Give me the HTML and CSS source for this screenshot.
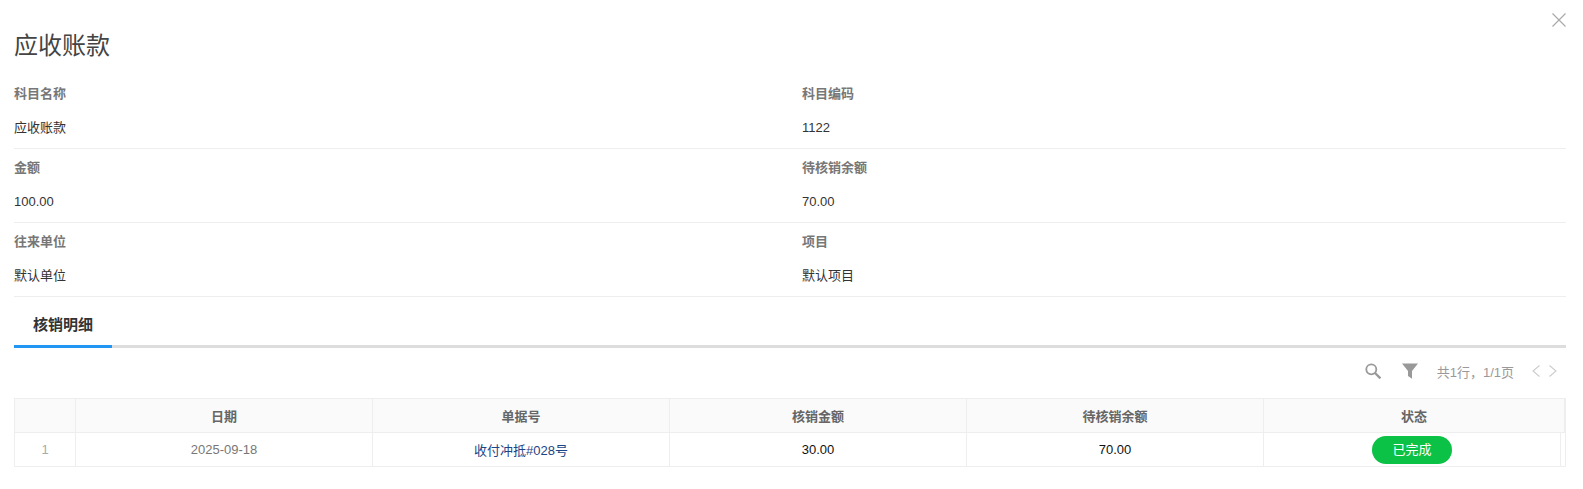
FILE: index.html
```html
<!DOCTYPE html>
<html>
<head>
  <link rel="stylesheet" href="styles.css">
</head>
<body>
  <div class="dialog">
    <button class="close-btn" aria-label="关闭">
      <svg width="14" height="14" viewBox="0 0 14 14"><path d="M0.5 0.5L13.5 13.5M13.5 0.5L0.5 13.5" stroke="#aaa" stroke-width="1.2" fill="none"/></svg>
    </button>
    <h2 class="title">应收账款</h2>

    <div class="fields">
      <div class="field"><div class="field-label">科目名称</div><div class="field-value">应收账款</div></div>
      <div class="field"><div class="field-label">科目编码</div><div class="field-value">1122</div></div>
      <div class="field"><div class="field-label">金额</div><div class="field-value">100.00</div></div>
      <div class="field"><div class="field-label">待核销余额</div><div class="field-value">70.00</div></div>
      <div class="field"><div class="field-label">往来单位</div><div class="field-value">默认单位</div></div>
      <div class="field"><div class="field-label">项目</div><div class="field-value">默认项目</div></div>
    </div>

    <div class="tabs">
      <div class="tab active">核销明细</div>
    </div>

    <div class="toolbar">
      <svg class="tool-search" width="16" height="16" viewBox="0 0 16 16"><circle cx="6.3" cy="6.3" r="5" stroke="#999" stroke-width="1.8" fill="none"/><path d="M10 10L15.4 15.4" stroke="#999" stroke-width="2.3" fill="none"/></svg>
      <svg class="tool-filter" width="16" height="16" viewBox="0 0 16 16"><path d="M0 0.5H16L10 8V15.8L6 13V8Z" fill="#999"/></svg>
      <span class="page-info">共1行，1/1页</span>
      <svg class="tool-prev" width="8" height="12" viewBox="0 0 8 12"><path d="M7.5 0.5L1 6L7.5 11.5" stroke="#ccc" stroke-width="1.1" fill="none"/></svg>
      <svg class="tool-next" width="8" height="12" viewBox="0 0 8 12"><path d="M0.5 0.5L7 6L0.5 11.5" stroke="#ccc" stroke-width="1.1" fill="none"/></svg>
    </div>

    <div class="table">
      <div class="row head">
        <div class="cell"></div>
        <div class="cell">日期</div>
        <div class="cell">单据号</div>
        <div class="cell">核销金额</div>
        <div class="cell">待核销余额</div>
        <div class="cell">状态</div>
        <div class="cell"></div>
      </div>
      <div class="row body">
        <div class="cell index">1</div>
        <div class="cell date">2025-09-18</div>
        <div class="cell"><a class="doc-link" href="#">收付冲抵#028号</a></div>
        <div class="cell num">30.00</div>
        <div class="cell num">70.00</div>
        <div class="cell"><span class="status">已完成</span></div>
        <div class="cell"></div>
      </div>
    </div>
  </div>
</body>
</html>
```

FILE: styles.css
```css
body {
  font-family: "Liberation Sans", "Noto Sans CJK SC", sans-serif;
  margin: 0;
  background: #fff;
  color: #333;
  font-size: 13px;
}

.dialog {
  position: relative;
  height: 489px;
  padding: 0 17px 0 14px;
  box-sizing: border-box;
  overflow: hidden;
}

.close-btn {
  position: absolute;
  top: 13px;
  right: 17px;
  width: 14px;
  height: 14px;
  padding: 0;
  border: none;
  background: none;
  line-height: 0;
}

.title {
  margin: 0;
  padding-top: 29px;
  height: 46px;
  font-size: 24px;
  line-height: 34px;
  font-weight: 400;
  color: #444;
}

.fields {
  display: grid;
  grid-template-columns: 788px 1fr;
}

.field {
  height: 74px;
  box-sizing: border-box;
  border-bottom: 1px solid #eee;
}

.field-label {
  height: 35px;
  line-height: 37px;
  font-weight: 700;
  color: #777;
}

.field-value {
  height: 38px;
  line-height: 36px;
  color: #333;
}

.tabs {
  height: 51px;
  box-sizing: border-box;
  border-bottom: 3px solid #ddd;
}

.tab {
  width: 98px;
  height: 51px;
  box-sizing: border-box;
  padding: 3px 0 0 19px;
  line-height: 50px;
  font-size: 15px;
  font-weight: 700;
  color: #333;
  border-bottom: 3px solid #2196f3;
}

.toolbar {
  display: flex;
  align-items: center;
  justify-content: flex-end;
  height: 46px;
  margin-bottom: 4px;
  padding-right: 9px;
  color: #999;
}

.tool-search { margin-right: 21px; }
.tool-filter { margin-right: 19px; }
.page-info { margin-right: 18px; }
.tool-prev { margin-right: 9px; }

.table {
  border: 1px solid #eee;
  border-bottom: none;
}

.row {
  display: grid;
  height: 34px;
  box-sizing: border-box;
  border-bottom: 1px solid #eee;
}

.row.head {
  grid-template-columns: 61px 297px 297px 297px 297px 301px 1fr;
  background: #fafafa;
  font-weight: 700;
  color: #666;
}

.row.body {
  grid-template-columns: 61px 297px 297px 297px 297px 297px 1fr;
}

.cell {
  display: flex;
  align-items: center;
  justify-content: center;
  border-right: 1px solid #eee;
  min-width: 0;
}

.cell:last-child {
  border-right: none;
}

.index {
  color: #aaa;
}

.date {
  color: #777;
}

.num {
  color: #111;
}

.doc-link {
  color: #1c4587;
  text-decoration: none;
}

.status {
  display: block;
  width: 80px;
  height: 28px;
  line-height: 28px;
  border-radius: 14px;
  background: #0bc146;
  color: #fff;
  text-align: center;
}
```
